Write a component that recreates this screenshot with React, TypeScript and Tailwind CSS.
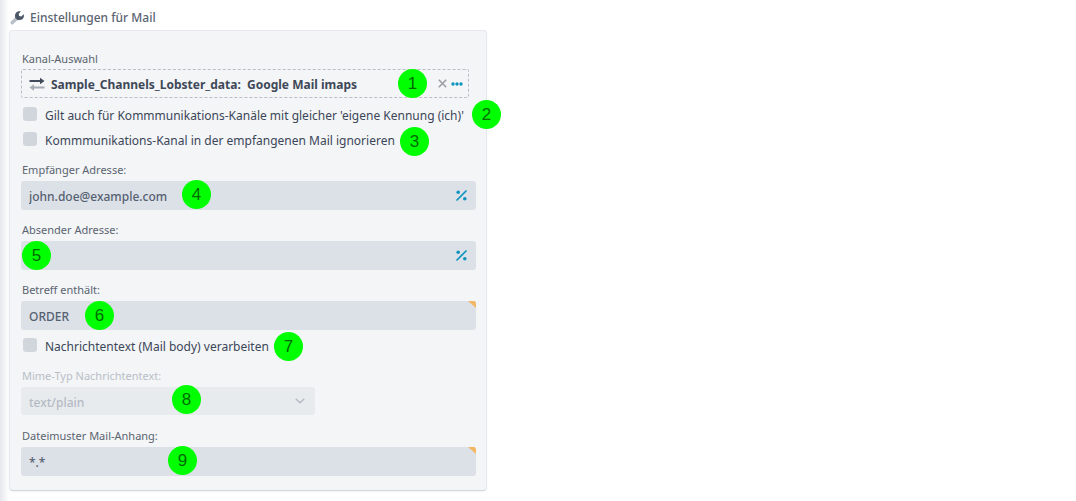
import type { ReactNode } from "react";

interface MarkerProps {
  number: number;
  className: string;
}

// numbered callout that floats over a form row
const Marker = ({ number, className }: MarkerProps) => (
  <span
    className={`absolute z-10 flex size-[29px] items-center justify-center rounded-full bg-[#00ff00] font-['Liberation_Sans'] text-[17px] leading-none text-[#006a00] ${className}`}
  >
    {number}
  </span>
);

const WrenchIcon = () => (
  <svg className="size-[14px]" viewBox="0 0 14 14" fill="none" aria-hidden="true">
    <path d="M2.200 11.800 6.500 7.500" stroke="#b9bfc8" strokeWidth="3.400" strokeLinecap="round" />
    <path
      d="M13.600 3.300 11.300 5.400 9.100 4.900 8.700 2.800 10.900.6C9 0 7 .5 5.900 1.900 5 3 4.800 4.300 5.200 5.500L4.600 6.100 8 9.500 8.800 8.800C10.200 9.200 11.800 8.900 12.800 7.800 14 6.600 14.200 4.800 13.600 3.300z"
      fill="#4b5768"
    />
  </svg>
);

const ExchangeIcon = () => (
  <svg className="h-[14px] w-4" viewBox="0 0 16 14" fill="none" aria-hidden="true">
    <path d="M.5 4H12" stroke="#414b5c" strokeWidth="2" />
    <path d="M11 .8 15.500 4 11 7.200z" fill="#414b5c" />
    <path d="M4 10.500H15.500" stroke="#a5abb5" strokeWidth="2" />
    <path d="M5 7.300.5 10.500 5 13.700z" fill="#a5abb5" />
  </svg>
);

const CloseIcon = () => (
  <svg className="size-[9px]" viewBox="0 0 9 9" aria-hidden="true">
    <path d="M.8.8l7.400 7.400M8.200.8.8 8.200" stroke="#9a9fa6" strokeWidth="1.600" />
  </svg>
);

const DotsIcon = () => (
  <svg className="h-[4px] w-[12px]" viewBox="0 0 12 4" fill="#0d93bd" aria-hidden="true">
    <circle cx="2" cy="2" r="1.700" />
    <circle cx="6" cy="2" r="1.700" />
    <circle cx="10" cy="2" r="1.700" />
  </svg>
);

const PercentIcon = () => (
  <svg className="size-[11px]" viewBox="0 0 11 11" fill="#0d93bd" aria-hidden="true">
    <path d="M1 10 10 1" stroke="#0d93bd" strokeWidth="1.700" strokeLinecap="round" />
    <circle cx="2.200" cy="2.200" r="1.800" />
    <circle cx="8.800" cy="8.800" r="1.800" />
  </svg>
);

interface CheckRowProps {
  id: string;
  label: string;
  children: ReactNode;
}

const CheckRow = ({ id, label, children }: CheckRowProps) => (
  <div className="relative flex h-[25px] items-center pl-[2px]">
    <input
      id={id}
      type="checkbox"
      className="size-[14px] shrink-0 appearance-none rounded-[3px] bg-[#d1d6dd] checked:bg-[#0d93bd]"
    />
    <label
      htmlFor={id}
      className="ml-2 pt-1 text-[12px] leading-5 whitespace-nowrap text-[#3c4658]"
    >
      {label}
    </label>
    {children}
  </div>
);

interface TextFieldProps {
  id: string;
  label: string;
  value: string;
  percent?: boolean;
  corner?: boolean;
  children: ReactNode;
}

const TextField = ({ id, label, value, percent, corner, children }: TextFieldProps) => (
  <div>
    <label htmlFor={id} className="block h-[22px] pl-px text-[11px] leading-[22px] text-[#5b6470]">
      {label}
    </label>
    <div className="relative flex h-[29px] items-center rounded-[3px] bg-[#dce1e8]">
      <input
        id={id}
        type="text"
        defaultValue={value}
        className="h-full min-w-0 flex-1 bg-transparent pt-px pl-2 text-[12px] font-medium text-[#556070] outline-none"
      />
      {percent && (
        <button type="button" aria-label="Variable" className="mr-[9px]">
          <PercentIcon />
        </button>
      )}
      {corner && (
        <svg className="absolute top-0 right-0 size-2" viewBox="0 0 8 8" aria-hidden="true">
          <path d="M0 0H6.500L8 1.500V7z" fill="#f2b866" />
        </svg>
      )}
      {children}
    </div>
  </div>
);

export default function App() {
  return (
    <div className="flex min-h-screen bg-white font-['Noto_Sans',sans-serif]">
      <div className="w-[9px] shrink-0 bg-linear-to-r from-[#e6e8ee] to-white" />
      <main className="w-full max-w-[478px] pb-[10px]">
        <h1 className="flex h-[30px] items-center gap-[6px] pt-[5px] pl-px text-[12px] font-medium text-[#5a6370]">
          <WrenchIcon />
          Einstellungen für Mail
        </h1>

        <form className="rounded-[4px] border border-[#e6e8ee] border-b-[#d3d8df] bg-[#f3f5f7] pt-4 pr-[10px] pb-[14px] pl-[11px] shadow-xs">
          <div className="h-[22px] pl-px text-[11px] leading-[24px] text-[#5b6470]">
            Kanal-Auswahl
          </div>
          <div className="relative mr-[7px] flex h-[29px] items-center rounded-[2px] border border-dashed border-[#b9bec6] pr-[5px] pl-[7px]">
            <ExchangeIcon />
            <span className="ml-[6px] pt-[2px] text-[12px] font-bold whitespace-pre text-[#3f4858]">
              {"Sample_Channels_Lobster_data:  Google Mail imaps"}
            </span>
            <button type="button" aria-label="Entfernen" className="ml-auto">
              <CloseIcon />
            </button>
            <button type="button" aria-label="Auswählen" className="ml-1">
              <DotsIcon />
            </button>
            <Marker number={1} className="-top-px left-[376px]" />
          </div>

          <div className="pt-[3px] pb-2">
            <CheckRow
              id="same-id"
              label="Gilt auch für Kommmunikations-Kanäle mit gleicher 'eigene Kennung (ich)'"
            >
              <Marker number={2} className="-top-px left-[451px]" />
            </CheckRow>
            <CheckRow
              id="ignore-channel"
              label="Kommmunikations-Kanal in der empfangenen Mail ignorieren"
            >
              <Marker number={3} className="top-px left-[379px]" />
            </CheckRow>
          </div>

          <div className="flex flex-col gap-[9px]">
            <TextField id="recipient" label="Empfänger Adresse:" value="john.doe@example.com" percent>
              <Marker number={4} className="-top-px left-[161px]" />
            </TextField>
            <TextField id="sender" label="Absender Adresse:" value="" percent>
              <Marker number={5} className="top-0 left-px" />
            </TextField>
            <TextField id="subject" label="Betreff enthält:" value="ORDER" corner>
              <Marker number={6} className="top-0 left-16" />
            </TextField>
          </div>

          <div className="pt-[2px] pb-2">
            <CheckRow id="body" label="Nachrichtentext (Mail body) verarbeiten">
              <Marker number={7} className="top-0 left-[253px]" />
            </CheckRow>
          </div>

          <div className="flex flex-col gap-[9px]">
            <div>
              <label
                htmlFor="mime"
                className="block h-[22px] pl-px text-[11px] leading-[22px] text-[#b9bec6]"
              >
                Mime-Typ Nachrichtentext:
              </label>
              <div className="relative h-[29px] max-w-[294px]">
                <select
                  id="mime"
                  disabled
                  className="block h-7 w-full appearance-none rounded-[3px] bg-[#e8ebee] pt-[3px] pl-2 text-[12px] font-medium text-[#b4bac4] opacity-100"
                >
                  <option>text/plain</option>
                </select>
                <svg
                  className="pointer-events-none absolute top-[11px] right-[10px] h-[6px] w-[10px]"
                  viewBox="0 0 10 6"
                  fill="none"
                  aria-hidden="true"
                >
                  <path d="M.7.7 5 4.800 9.300.7" stroke="#b4bac4" strokeWidth="1.400" />
                </svg>
                <Marker number={8} className="-top-[2px] left-[151px]" />
              </div>
            </div>
            <TextField id="pattern" label="Dateimuster Mail-Anhang:" value="*.*" corner>
              <Marker number={9} className="-top-px left-[147px]" />
            </TextField>
          </div>
        </form>
      </main>
    </div>
  );
}
